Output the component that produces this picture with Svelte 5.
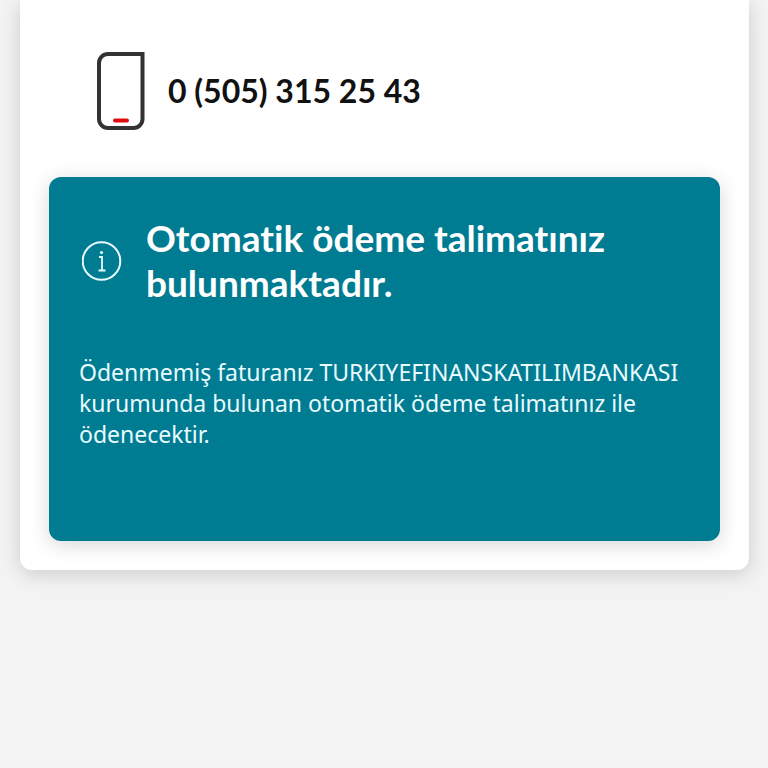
<script>
  const phone = '0 (505) 315 25 43';
  const title = 'Otomatik ödeme talimatınız bulunmaktadır.';
  const bank = 'TURKIYEFINANSKATILIMBANKASI';
</script>

<main>
  <section class="card">
    <header class="line">
      <svg class="phone" width="48" height="80" viewBox="0 0 48 80" fill="none" aria-hidden="true">
        <path d="M11 3H45.5V68a9 9 0 0 1-9 9H11a9 9 0 0 1-9-9V12a9 9 0 0 1 9-9Z" stroke="#333" stroke-width="4" />
        <path d="M18 69.5H30" stroke="#e00a10" stroke-width="4" stroke-linecap="round" />
      </svg>
      <strong>{phone}</strong>
    </header>

    <article class="notice">
      <div class="heading">
        <svg width="40" height="42" viewBox="0 0 40 42" fill="none" stroke="#e9fbff" aria-hidden="true">
          <circle cx="19.5" cy="22" r="18.8" stroke-width="2" />
          <path d="M17 18h3V31.5M16.5 31.5h7" stroke-width="1.8" />
          <circle cx="19.5" cy="13.5" r="1.6" fill="#e9fbff" stroke="none" />
        </svg>
        <h1>{title}</h1>
      </div>
      <p>Ödenmemiş faturanız {bank} kurumunda bulunan otomatik ödeme talimatınız ile ödenecektir.</p>
    </article>
  </section>
</main>

<style>
  :global(body) {
    margin: 0;
    background: #f3f3f3;
    font-family: Lato, "Noto Sans", sans-serif;
    font-variant-ligatures: none;
  }

  main {
    box-sizing: border-box;
    min-height: 100vh;
    padding: 0 19px 32px 20px;
  }

  .card {
    padding: 51px 29px 29px;
    background: #fff;
    border-radius: 0 0 12px 12px;
    box-shadow: 0 4px 20px rgb(0 0 0 / 16%);
  }

  .line {
    display: flex;
    align-items: center;
    gap: 23px;
    padding-left: 48px;
    margin-bottom: 46px;
    color: #111;
  }

  .line strong {
    font-size: 32px;
    font-weight: 700;
    line-height: 44px;
  }

  .notice {
    box-sizing: border-box;
    min-height: 364px;
    padding: 38px 30px;
    border-radius: 12px;
    background: #007c92;
    box-shadow: 0 4px 20px rgb(0 0 0 / 16%);
    color: #fff;
  }

  .heading {
    display: flex;
    align-items: center;
    gap: 24px;
    padding-left: 3px;
  }

  .heading svg {
    flex: none;
  }

  h1 {
    margin: 0;
    max-width: 500px;
    font-size: 37px;
    font-weight: 700;
    line-height: 45px;
  }

  p {
    margin: 52px 0 0;
    color: #e9fbff;
    font-family: "Noto Sans", sans-serif;
    font-size: 23px;
    line-height: 31px;
  }
</style>
